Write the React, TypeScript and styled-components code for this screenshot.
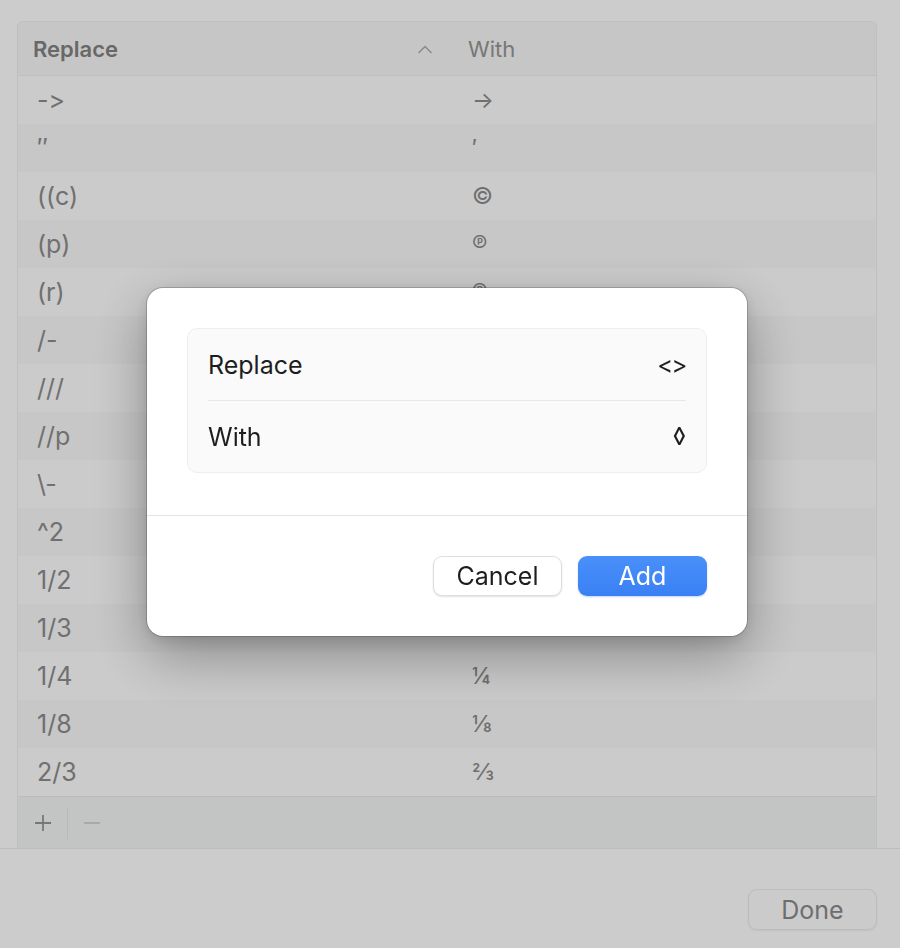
import { FunctionComponent } from "react";
import styled, { createGlobalStyle } from "styled-components";

const GlobalStyle = createGlobalStyle`
  html, body {
    margin: 0;
    padding: 0;
    height: 100%;
    background: #ffffff;
  }
  body {
    font-family: "Inter", "Liberation Sans", sans-serif;
    font-variant-ligatures: none;
    font-feature-settings: "calt" 0, "liga" 0;
    -webkit-font-smoothing: antialiased;
  }
  #root {
    min-height: 100%;
  }
`;

const rows: [string, string][] = [
  ["->", "→"],
  ["″", "′"],
  ["((c)", "©"],
  ["(p)", "℗"],
  ["(r)", "®"],
  ["/-", "÷"],
  ["///", "⁄"],
  ["//p", "¶"],
  ["\\-", "±"],
  ["^2", "²"],
  ["1/2", "½"],
  ["1/3", "⅓"],
  ["1/4", "¼"],
  ["1/8", "⅛"],
  ["2/3", "⅔"],
];

const App: FunctionComponent = () => {
  return (
    <>
      <GlobalStyle />
      <Window>
        <TableArea>
          <Table>
            <HeaderRow>
              <HeaderCell $bold>
                Replace
                <SortIcon width="16" height="10" viewBox="0 0 16 10">
                  <path d="M2 8.5 L8 2.5 L14 8.5" fill="none" stroke="currentColor" strokeWidth="1.6" strokeLinecap="round" strokeLinejoin="round" />
                </SortIcon>
              </HeaderCell>
              <HeaderCell>With</HeaderCell>
            </HeaderRow>
            <Body>
              {rows.map(([from, to], i) => (
                <Row key={from} $odd={i % 2 === 1}>
                  <Cell>{from}</Cell>
                  <Cell $value>{to}</Cell>
                </Row>
              ))}
            </Body>
            <BottomBar>
              <BarButton>
                <svg width="20" height="20" viewBox="0 0 20 20">
                  <path d="M10 2 V18 M2 10 H18" stroke="currentColor" strokeWidth="1.8" />
                </svg>
              </BarButton>
              <BarDivider />
              <BarButton $disabled>
                <svg width="20" height="20" viewBox="0 0 20 20">
                  <path d="M2 10 H18" stroke="currentColor" strokeWidth="1.8" />
                </svg>
              </BarButton>
            </BottomBar>
          </Table>
        </TableArea>
        <Footer>
          <DoneButton>Done</DoneButton>
        </Footer>
      </Window>

      <Backdrop>
        <Dialog>
          <DialogBody>
            <Group>
              <FieldRow>
                <FieldLabel>Replace</FieldLabel>
                <FieldInput defaultValue="<>" $tight />
              </FieldRow>
              <FieldRow $divider>
                <FieldLabel>With</FieldLabel>
                <FieldInput defaultValue="◊" />
              </FieldRow>
            </Group>
          </DialogBody>
          <DialogFooter>
            <Button>Cancel</Button>
            <Button $primary>Add</Button>
          </DialogFooter>
        </Dialog>
      </Backdrop>
    </>
  );
};

export default App;

const Window = styled.div`
  display: flex;
  flex-direction: column;
  min-height: 100vh;
  background: #ffffff;
`;

const TableArea = styled.div`
  padding: 21px 23px 0 17px;
`;

const Table = styled.div`
  display: flex;
  flex-direction: column;
  border: 1px solid #efefef;
  border-bottom: none;
  border-radius: 6px 6px 0 0;
  overflow: hidden;
  background: #fefefe;
`;

const HeaderRow = styled.div`
  display: grid;
  grid-template-columns: 435px 1fr;
  height: 53px;
  background: #f8f8f8;
  border-bottom: 1px solid #efefef;
`;

const HeaderCell = styled.div<{ $bold?: boolean }>`
  display: flex;
  align-items: center;
  justify-content: space-between;
  padding: 0 20px 0 15px;
  font-size: 22px;
  font-weight: ${(p) => (p.$bold ? 600 : 400)};
  color: ${(p) => (p.$bold ? "#838383" : "#959595")};
`;

const SortIcon = styled.svg`
  color: #b0b0b0;
`;

const Body = styled.div`
  display: flex;
  flex-direction: column;
`;

const Row = styled.div<{ $odd: boolean }>`
  display: grid;
  grid-template-columns: 435px 1fr;
  height: 48px;
  align-items: center;
  background: ${(p) => (p.$odd ? "#f9f9f9" : "#fefefe")};
`;

const Cell = styled.div<{ $value?: boolean }>`
  padding-left: 19px;
  font-size: ${(p) => (p.$value ? "23px" : "25px")};
  color: #8c8c8c;
  white-space: pre;
`;

const BottomBar = styled.div`
  display: flex;
  align-items: center;
  height: 51px;
  padding-left: 14px;
  background: #f4f7f6;
  border-top: 1px solid #ececec;
`;

const BarButton = styled.div<{ $disabled?: boolean }>`
  display: flex;
  align-items: center;
  justify-content: center;
  width: 22px;
  height: 32px;
  color: ${(p) => (p.$disabled ? "#cfd1d0" : "#959595")};
`;

const BarDivider = styled.div`
  width: 1px;
  height: 32px;
  margin: 0 13px;
  background: #e6e8e7;
`;

const Footer = styled.div`
  flex: 1;
  display: flex;
  justify-content: flex-end;
  align-items: flex-start;
  padding: 40px 23px 0 0;
  border-top: 1px solid #ececec;
`;

const DoneButton = styled.button`
  width: 129px;
  height: 41px;
  border: 1px solid #ececec;
  border-radius: 9px;
  background: #fefefe;
  box-shadow: 0 1px 2px rgba(0, 0, 0, 0.06);
  font-family: "Inter", "Liberation Sans", sans-serif;
  font-size: 25px;
  color: #8a8a8a;
`;

const Backdrop = styled.div`
  position: fixed;
  inset: 0;
  display: flex;
  align-items: flex-start;
  padding: 288px 0 0 147px;
  background: rgba(0, 0, 0, 0.2);
`;

const Dialog = styled.div`
  width: 600px;
  background: #ffffff;
  border-radius: 16px;
  box-shadow: 0 0 0 1px rgba(0, 0, 0, 0.18), 0 20px 56px rgba(0, 0, 0, 0.32),
    0 4px 14px rgba(0, 0, 0, 0.12);
  overflow: hidden;
`;

const DialogBody = styled.div`
  padding: 40px 40px 42px;
  border-bottom: 1px solid #e2e2e2;
`;

const Group = styled.div`
  display: flex;
  flex-direction: column;
  padding: 0 20px;
  background: #fafafa;
  border: 1px solid #eeeeee;
  border-radius: 10px;
`;

const FieldRow = styled.div<{ $divider?: boolean }>`
  display: flex;
  align-items: center;
  height: 71px;
  border-top: ${(p) => (p.$divider ? "1px solid #e8e8e8" : "none")};
`;

const FieldLabel = styled.label`
  font-size: 25px;
  color: #1e1e1e;
`;

const FieldInput = styled.input<{ $tight?: boolean }>`
  flex: 1;
  min-width: 0;
  border: none;
  outline: none;
  background: transparent;
  text-align: right;
  font-family: "Inter", "Liberation Sans", sans-serif;
  font-size: 24px;
  letter-spacing: ${(p) => (p.$tight ? "-1.5px" : "0")};
  color: #1e1e1e;
  padding: 0;
`;

const DialogFooter = styled.div`
  display: flex;
  justify-content: flex-end;
  gap: 16px;
  padding: 40px;
`;

const Button = styled.button<{ $primary?: boolean }>`
  width: 129px;
  height: 40px;
  border-radius: 9px;
  font-family: "Inter", "Liberation Sans", sans-serif;
  font-size: 25px;
  border: ${(p) => (p.$primary ? "none" : "1px solid #dedede")};
  background: ${(p) =>
    p.$primary ? "linear-gradient(#4990fa, #3a80f5)" : "#ffffff"};
  color: ${(p) => (p.$primary ? "#ffffff" : "#1e1e1e")};
  box-shadow: ${(p) =>
    p.$primary
      ? "0 1px 2px rgba(0, 90, 230, 0.25)"
      : "0 1px 2px rgba(0, 0, 0, 0.12)"};
`;
